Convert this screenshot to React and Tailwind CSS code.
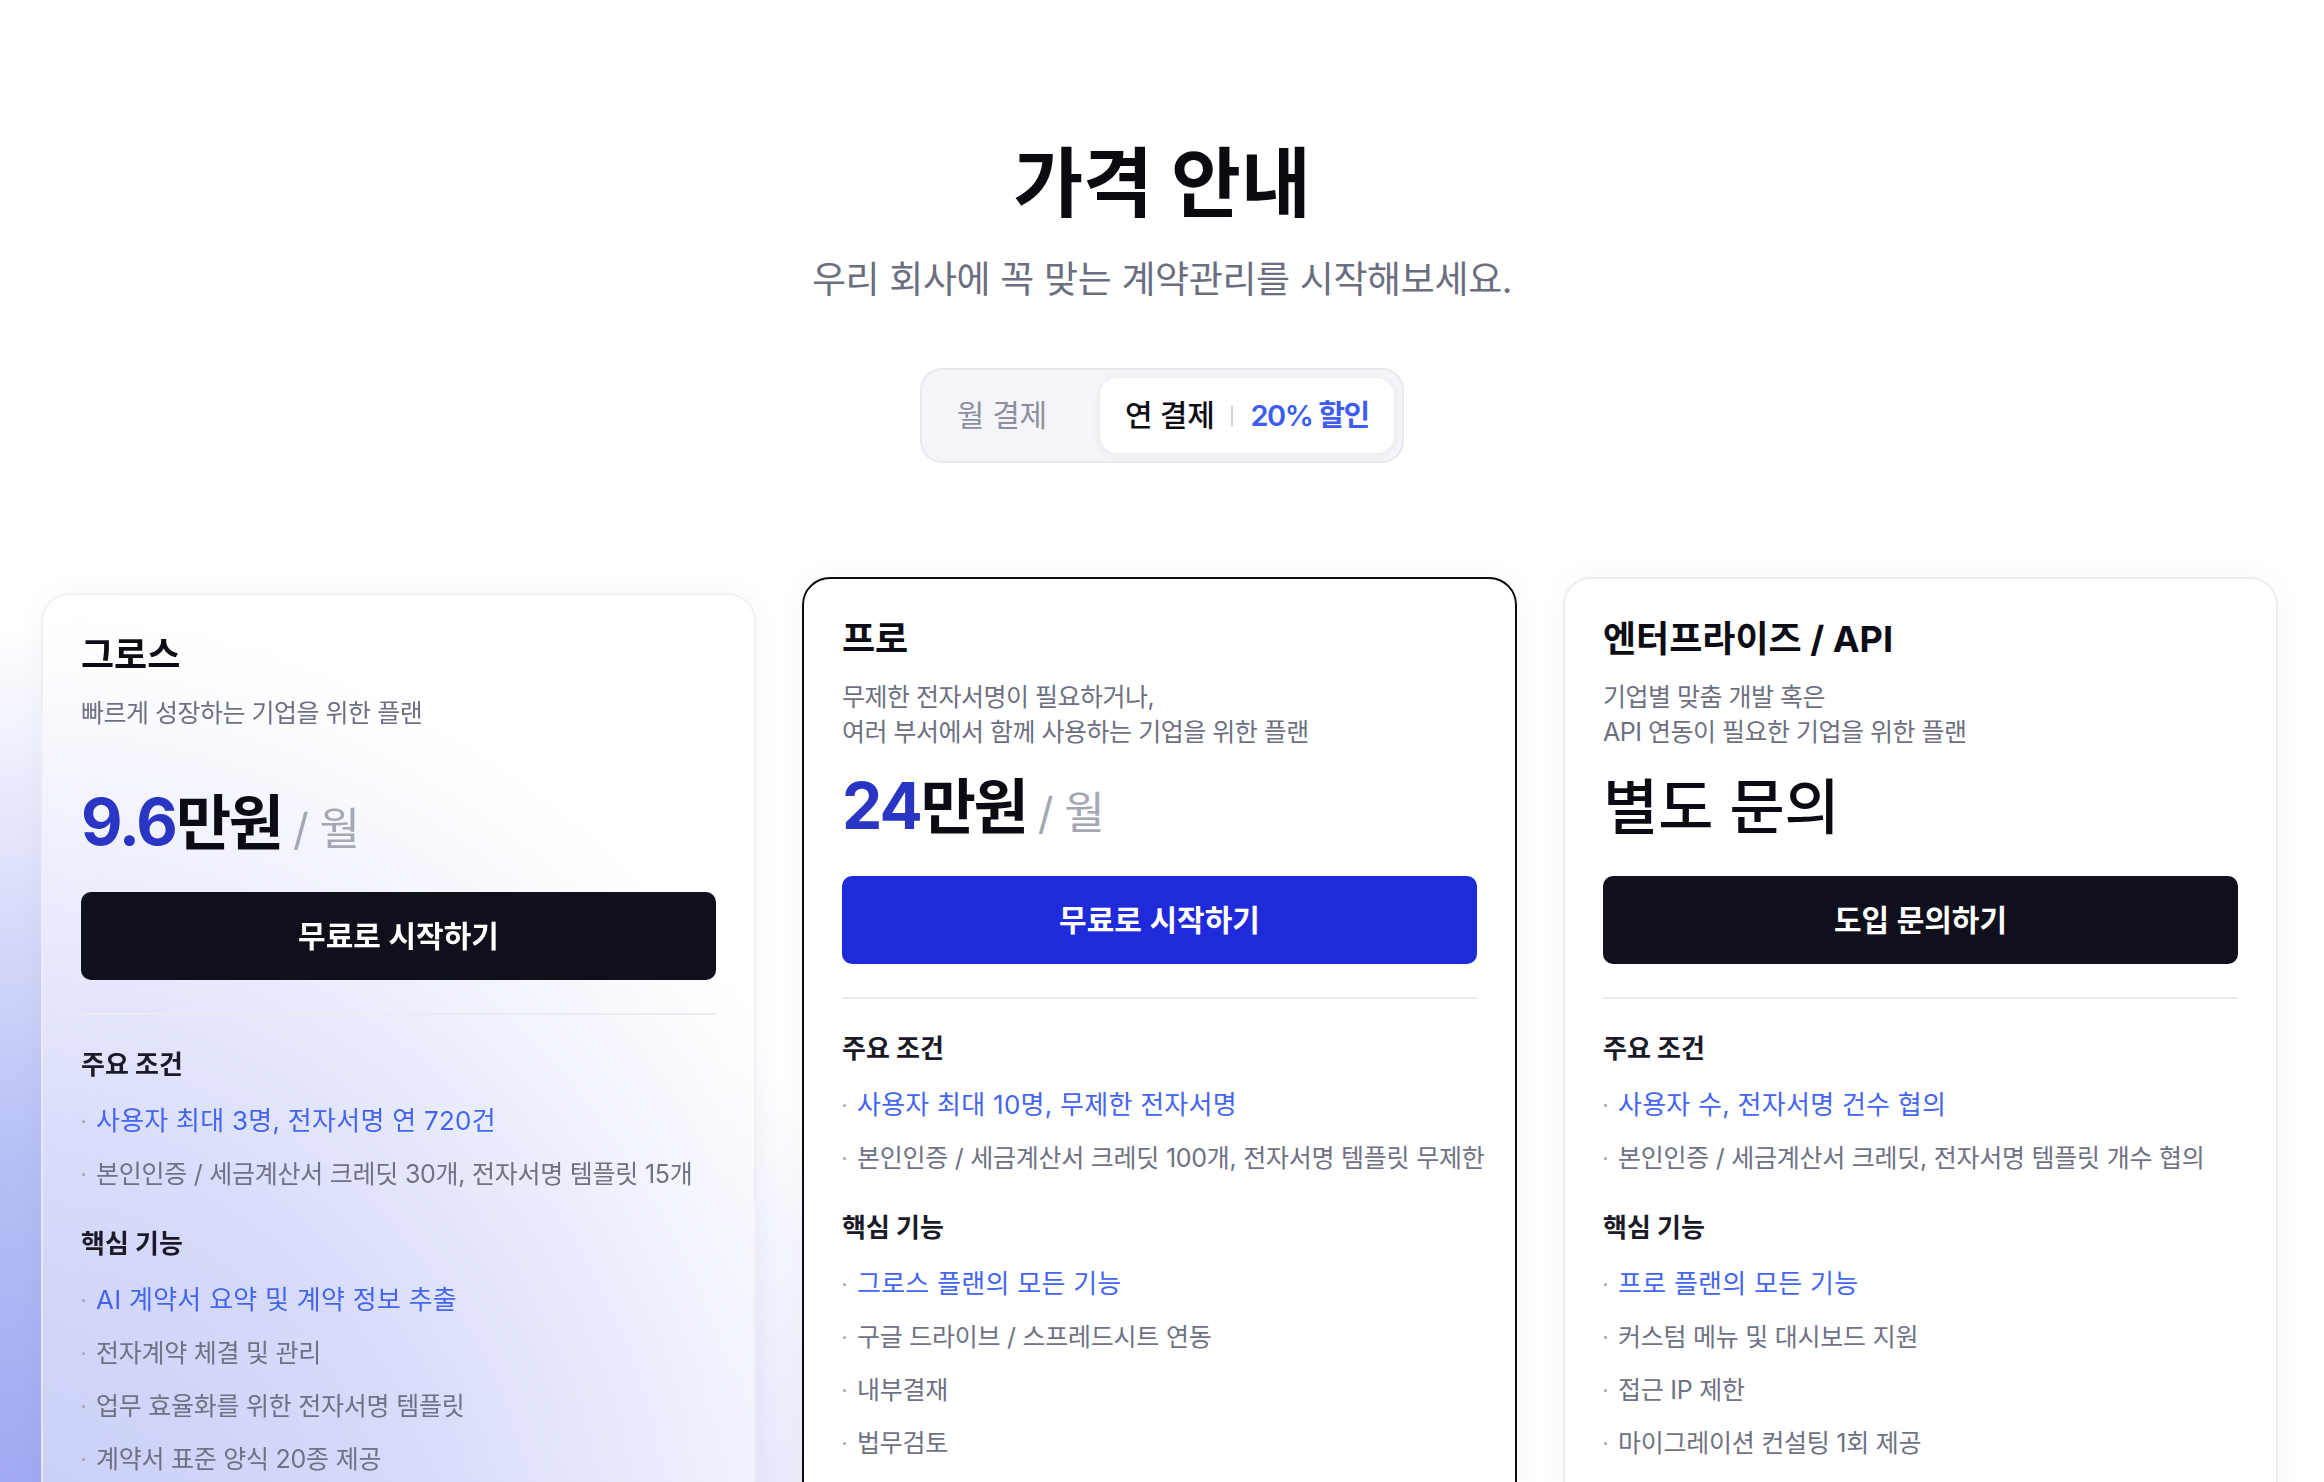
const plans = [
  {
    key: "growth",
    name: "그로스",
    desc: ["빠르게 성장하는 기업을 위한 플랜"],
    num: "9.6",
    cta: "무료로 시작하기",
    ctaClass: "bg-[#0f101c]",
    cardClass: "mt-4 border-[#ececf3]/80 bg-white/45 backdrop-blur-xl",
    terms: [
      { t: "사용자 최대 3명, 전자서명 연 720건", hl: true },
      { t: "본인인증 / 세금계산서 크레딧 30개, 전자서명 템플릿 15개" },
    ],
    features: [
      { t: "AI 계약서 요약 및 계약 정보 추출", hl: true },
      { t: "전자계약 체결 및 관리" },
      { t: "업무 효율화를 위한 전자서명 템플릿" },
      { t: "계약서 표준 양식 20종 제공" },
    ],
  },
  {
    key: "pro",
    name: "프로",
    desc: ["무제한 전자서명이 필요하거나,", "여러 부서에서 함께 사용하는 기업을 위한 플랜"],
    num: "24",
    cta: "무료로 시작하기",
    ctaClass: "bg-[#1f2bdb]",
    cardClass: "border-[#0c0c12] bg-white",
    terms: [
      { t: "사용자 최대 10명, 무제한 전자서명", hl: true },
      { t: "본인인증 / 세금계산서 크레딧 100개, 전자서명 템플릿 무제한" },
    ],
    features: [
      { t: "그로스 플랜의 모든 기능", hl: true },
      { t: "구글 드라이브 / 스프레드시트 연동" },
      { t: "내부결재" },
      { t: "법무검토" },
    ],
  },
  {
    key: "enterprise",
    name: "엔터프라이즈 / API",
    desc: ["기업별 맞춤 개발 혹은", "API 연동이 필요한 기업을 위한 플랜"],
    num: null,
    cta: "도입 문의하기",
    ctaClass: "bg-[#0f101c]",
    cardClass: "border-[#ececf3] bg-white",
    terms: [
      { t: "사용자 수, 전자서명 건수 협의", hl: true },
      { t: "본인인증 / 세금계산서 크레딧, 전자서명 템플릿 개수 협의" },
    ],
    features: [
      { t: "프로 플랜의 모든 기능", hl: true },
      { t: "커스텀 메뉴 및 대시보드 지원" },
      { t: "접근 IP 제한" },
      { t: "마이그레이션 컨설팅 1회 제공" },
    ],
  },
];

function Item({ t, hl }) {
  return (
    <li className="flex h-[36px] items-center">
      <span className="ml-[1px] mr-[11px] h-[3px] w-[3px] shrink-0 rounded-full bg-[#a3a5b4]" />
      <span
        className={`whitespace-nowrap leading-[36px] ${
          hl ? "text-[26px] tracking-[0.01em] text-[#4465f0]" : "text-[25px] tracking-[-0.01em] text-[#6f7184]"
        }`}
      >
        {t}
      </span>
    </li>
  );
}

function Section({ title, items, className }) {
  return (
    <div className={className}>
      <h4 className="text-[26px] font-bold leading-[36px] tracking-[0em] text-[#1a1a28]">{title}</h4>
      <ul className="mt-[20px] flex flex-col gap-[17px]">
        {items.map((it) => (
          <Item key={it.t} {...it} />
        ))}
      </ul>
    </div>
  );
}

function PlanCard({ plan }) {
  return (
    <div
      className={`w-[715px] shrink-0 rounded-[28px] border-2 px-[38px] pb-[56px] pt-[39px] shadow-[0_0_30px_rgba(20,20,60,0.04)] ${plan.cardClass}`}
    >
      <h3 className="whitespace-nowrap text-[36px] font-bold leading-[42px] tracking-[0em] text-[#0c0c14]">
        {plan.name}
      </h3>
      <p className="mt-[20px] min-h-[70px] text-[25px] leading-[35px] tracking-[-0.02em] text-[#6e7082]">
        {plan.desc.map((line) => (
          <span key={line} className="block whitespace-nowrap">
            {line}
          </span>
        ))}
      </p>

      {/* Price */}
      <div className="mt-[21px] h-[72px] whitespace-nowrap text-[60px] leading-[72px]">
        {plan.num ? (
          <>
            <span className="text-[64px] font-bold leading-none tracking-[-0.03em] text-[#2a35c4]">{plan.num}</span>
            <span className="font-bold leading-none tracking-[-0.04em] text-[#0b0b14]">만원</span>
            <span className="text-[44px] leading-none tracking-[-0.02em] text-[#a4a7b4]">{" / 월"}</span>
          </>
        ) : (
          <span className="font-medium leading-none tracking-[0em] text-[#0b0b14]">별도 문의</span>
        )}
      </div>

      <button
        className={`mt-[33px] flex h-[88px] w-full items-center justify-center rounded-[10px] text-[30px] font-semibold tracking-[0em] text-white ${plan.ctaClass}`}
      >
        {plan.cta}
      </button>

      <div className="mt-[33px] h-[2px] bg-[#ebebf2]" />

      <Section className="mt-[32px]" title="주요 조건" items={plan.terms} />
      <Section className="mt-[34px]" title="핵심 기능" items={plan.features} />
    </div>
  );
}

export default function App() {
  return (
    <div className="min-h-screen bg-white bg-[radial-gradient(ellipse_1150px_1250px_at_0px_1650px,rgba(148,158,240,1)_0%,rgba(160,170,242,0.75)_40%,rgba(255,255,255,0)_82%)] font-[Inter,'Noto_Sans_CJK_KR',sans-serif]">
      {/* Header */}
      <div className="flex flex-col items-center pt-[138px]">
        <h1 className="text-[76px] font-bold leading-[90px] tracking-[0em] text-[#0a0a0f]">가격 안내</h1>
        <p className="mt-[28px] text-[37px] leading-[48px] tracking-[-0.01em] text-[#6b6d80]">
          우리 회사에 꼭 맞는 계약관리를 시작해보세요.
        </p>

        {/* Billing toggle */}
        <div className="mt-[64px] flex h-[95px] w-[484px] items-center gap-[24px] rounded-[22px] border-2 border-[#e7e7ef] bg-[#f5f5f9] p-[7px]">
          <button className="flex h-full w-[146px] items-center justify-center text-[30px] tracking-[-0.01em] text-[#8d8fa0]">
            월 결제
          </button>
          <div className="flex h-[77px] w-[297px] items-center justify-center gap-[17px] rounded-[18px] border border-[#ececf2] bg-white shadow-[0_2px_8px_rgba(30,30,60,0.06)]">
            <span className="text-[30px] font-medium tracking-[-0.01em] text-[#0d0d14]">연 결제</span>
            <span className="h-[20px] w-[2px] bg-[#cfd0db]" />
            <span className="text-[29px] font-semibold tracking-[-0.05em] text-[#3d5cf2]">20% 할인</span>
          </div>
        </div>
      </div>

      {/* Plans */}
      <div className="mt-[114px] flex items-start gap-[46px] pl-[41px]">
        {plans.map((p) => (
          <PlanCard key={p.key} plan={p} />
        ))}
      </div>
    </div>
  );
}
